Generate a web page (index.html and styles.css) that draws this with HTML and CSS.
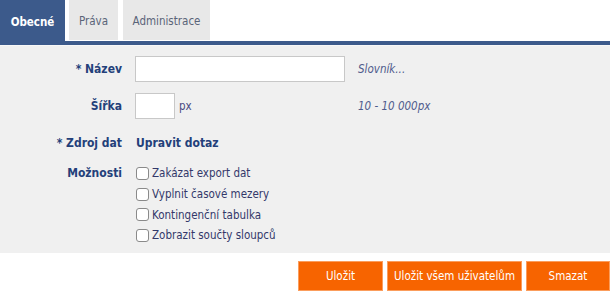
FILE: index.html
```html
<!DOCTYPE html>
<html lang="cs">
<head>
<meta charset="utf-8">
<title>Obecné</title>
<link rel="stylesheet" href="styles.css">
</head>
<body>
<div class="page">
  <nav class="tabs">
    <div class="tab active">Obecné</div>
    <div class="tab tab-prava">Práva</div>
    <div class="tab tab-admin">Administrace</div>
  </nav>
  <div class="tabline"></div>
  <section class="panel">
    <div class="row row-name">
      <label class="lbl">* Název</label>
      <input class="text wide" type="text">
      <span class="hint">Slovník...</span>
    </div>
    <div class="row row-width">
      <label class="lbl">Šířka</label>
      <span class="field"><input class="text narrow" type="text"><span class="unit">px</span></span>
      <span class="hint">10 - 10 000px</span>
    </div>
    <div class="row row-src">
      <label class="lbl">* Zdroj dat</label>
      <span class="link">Upravit dotaz</span>
    </div>
    <div class="row row-opts">
      <label class="lbl">Možnosti</label>
      <div class="checks">
        <label class="chk"><input type="checkbox"><span>Zakázat export dat</span></label>
        <label class="chk"><input type="checkbox"><span>Vyplnit časové mezery</span></label>
        <label class="chk"><input type="checkbox"><span>Kontingenční tabulka</span></label>
        <label class="chk"><input type="checkbox"><span>Zobrazit součty sloupců</span></label>
      </div>
    </div>
  </section>
  <footer class="actions">
    <button class="btn btn-save">Uložit</button>
    <button class="btn btn-saveall">Uložit všem uživatelům</button>
    <button class="btn btn-del">Smazat</button>
  </footer>
</div>
</body>
</html>
```

FILE: styles.css
```css
html, body {
  margin: 0;
  padding: 0;
  background: #ffffff;
}
body {
  font-family: "DejaVu Sans Condensed", "DejaVu Sans", sans-serif;
  font-size: 11.5px;
  color: #2b3f6e;
}
.page {
  width: 610px;
}
.tabs {
  display: flex;
  height: 41px;
  align-items: flex-start;
}
.tab {
  display: flex;
  align-items: center;
  justify-content: center;
  background: #e8e8e8;
  color: #5a6478;
  height: 40px;
  padding-top: 2px;
  box-sizing: border-box;
}
.tab.active {
  width: 65px;
  height: 41px;
  background: #3c5a8b;
  color: #ffffff;
  font-weight: bold;
}
.tab-prava {
  width: 49px;
  margin-left: 4px;
}
.tab-admin {
  width: 87px;
  margin-left: 5px;
}
.tabline {
  height: 4px;
  background: #3c5a8b;
  border-bottom: 1px solid #f7f7f7;
}
.panel {
  background: #f0f0f0;
  height: 207px;
  box-sizing: border-box;
  padding-top: 10px;
}
.row {
  display: grid;
  grid-template-columns: 122px 210px 1fr;
  column-gap: 13px;
  align-items: center;
}
.row-width { margin-top: 11px; }
.row-src { margin-top: 13px; height: 22px; }
.row-opts { margin-top: 9px; align-items: start; }
.lbl {
  text-align: right;
  font-weight: bold;
  color: #23407a;
  font-size: 12px;
}
.row-opts .lbl { line-height: 20.7px; }
.text {
  box-sizing: border-box;
  height: 26px;
  border: 1px solid #c8c8c8;
  background: #ffffff;
  margin: 0;
  padding: 0 4px;
  font: inherit;
}
.wide { width: 210px; }
.narrow { width: 40px; }
.field {
  display: flex;
  align-items: center;
}
.unit {
  margin-left: 4px;
  color: #4a4a82;
}
.hint {
  font-style: italic;
  color: #4f5b8c;
}
.link {
  font-weight: bold;
  color: #23407a;
  font-size: 12px;
  margin-left: 1px;
}
.checks {
  display: flex;
  flex-direction: column;
  grid-column: 2 / 4;
}
.chk {
  display: flex;
  align-items: center;
  height: 20.7px;
  color: #33386a;
}
.chk input {
  appearance: none;
  -webkit-appearance: none;
  width: 13px;
  height: 13px;
  margin: 0 3px 0 1px;
  border: 1px solid #8a8a8a;
  border-radius: 3px;
  background: #ffffff;
  box-sizing: border-box;
}
.actions {
  display: flex;
  justify-content: flex-end;
  gap: 4px;
  margin-top: 8px;
}
.btn {
  height: 30px;
  box-sizing: border-box;
  background: #f76400;
  border: 1px solid #fb9d5c;
  color: #ffffff;
  font: inherit;
  font-size: 11.5px;
  padding: 0;
}
.btn-save { width: 85px; }
.btn-saveall { width: 135px; }
.btn-del { width: 84px; }
```
